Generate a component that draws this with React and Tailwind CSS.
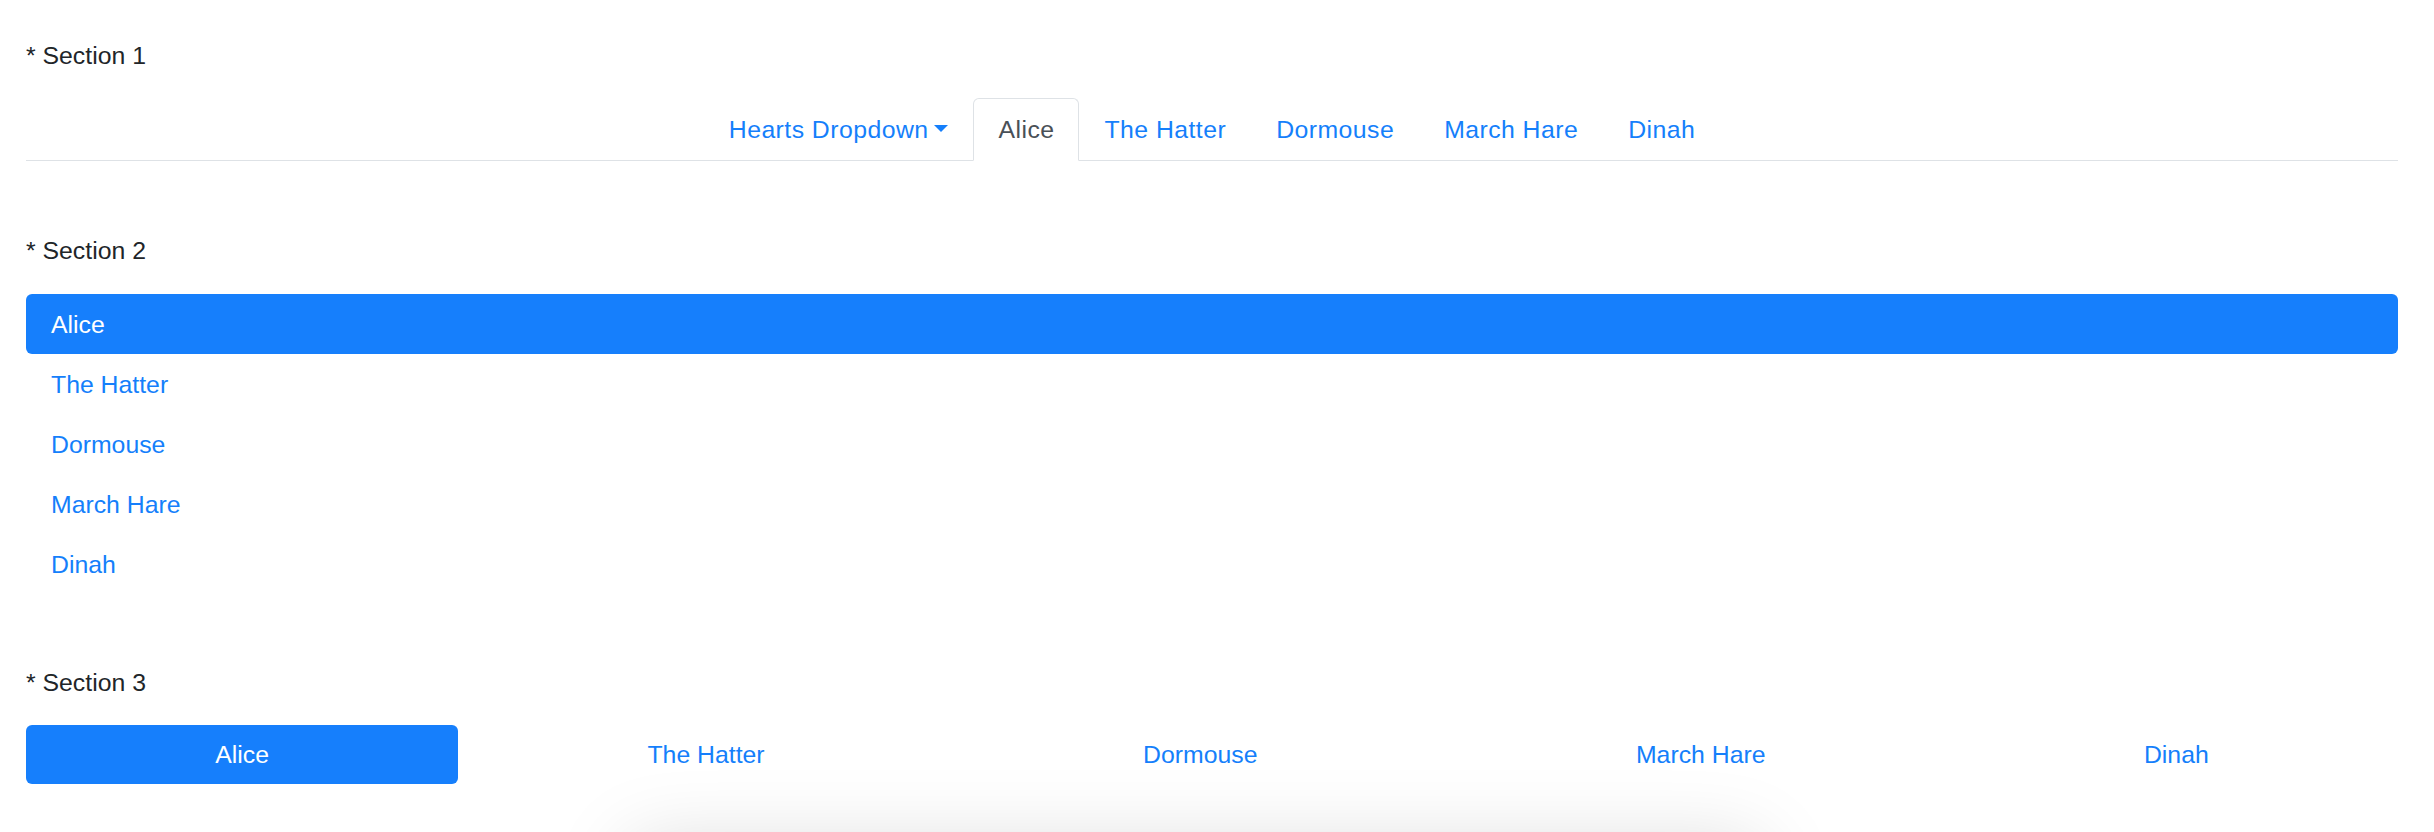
import React from 'react';

const names = ['The Hatter', 'Dormouse', 'March Hare', 'Dinah'];

const Label = ({ children }) => (
  <div className="h-[37px] leading-[37px] text-[#212529]">{children}</div>
);

const App = () => {
  return (
    <div
      className="relative h-[832px] overflow-hidden bg-white text-[24.8px] leading-[37px]"
      style={{ fontFamily: '"Liberation Sans", Arial, sans-serif' }}
    >
      <div className="pl-[26px] pr-[36px] pt-[37px]">
        {/* Section 1: centered tabs */}
        <Label>* Section 1</Label>
        <div className="mt-[24px] flex justify-center border-b border-[#dee2e6] tracking-[0.45px]">
          <div className="-mb-px flex">
            <a className="flex h-[62px] items-center px-[25px] text-[#157ffb]">
              Hearts Dropdown
              <span className="ml-[6px] mb-[2px] inline-block h-0 w-0 border-x-[7.5px] border-t-[7.5px] border-x-transparent border-t-[#157ffb]" />
            </a>
            <a className="flex h-[63px] items-center rounded-t-[6px] border border-b-white border-[#dee2e6] bg-white px-[24px] text-[#495057]">
              Alice
            </a>
            {names.map((n) => (
              <a key={n} className="flex h-[62px] items-center px-[25px] text-[#157ffb]">
                {n}
              </a>
            ))}
          </div>
        </div>

        {/* Section 2: vertical pills */}
        <div className="mt-[71px]">
          <Label>* Section 2</Label>
        </div>
        <div className="mt-[25px] flex flex-col">
          <a className="flex h-[60px] items-center rounded-[6px] bg-[#167ffc] px-[25px] text-white">Alice</a>
          {names.map((n) => (
            <a key={n} className="flex h-[60px] items-center px-[25px] text-[#157ffb]">
              {n}
            </a>
          ))}
        </div>

        {/* Section 3: filled pills */}
        <div className="mt-[70px]">
          <Label>* Section 3</Label>
        </div>
        <div className="mt-[24px] flex">
          <a className="flex h-[59px] flex-auto items-center justify-center rounded-[6px] bg-[#167ffc] px-[25px] text-white">
            Alice
          </a>
          {names.map((n) => (
            <a key={n} className="flex h-[59px] flex-auto items-center justify-center px-[25px] text-[#157ffb]">
              {n}
            </a>
          ))}
        </div>
      </div>

      {/* shadow of a floating panel just below the fold */}
      <div className="absolute left-[630px] top-[845px] h-[200px] w-[1130px] bg-white shadow-[0_0_80px_rgba(0,0,0,0.15)]" />
    </div>
  );
};

export default App;
